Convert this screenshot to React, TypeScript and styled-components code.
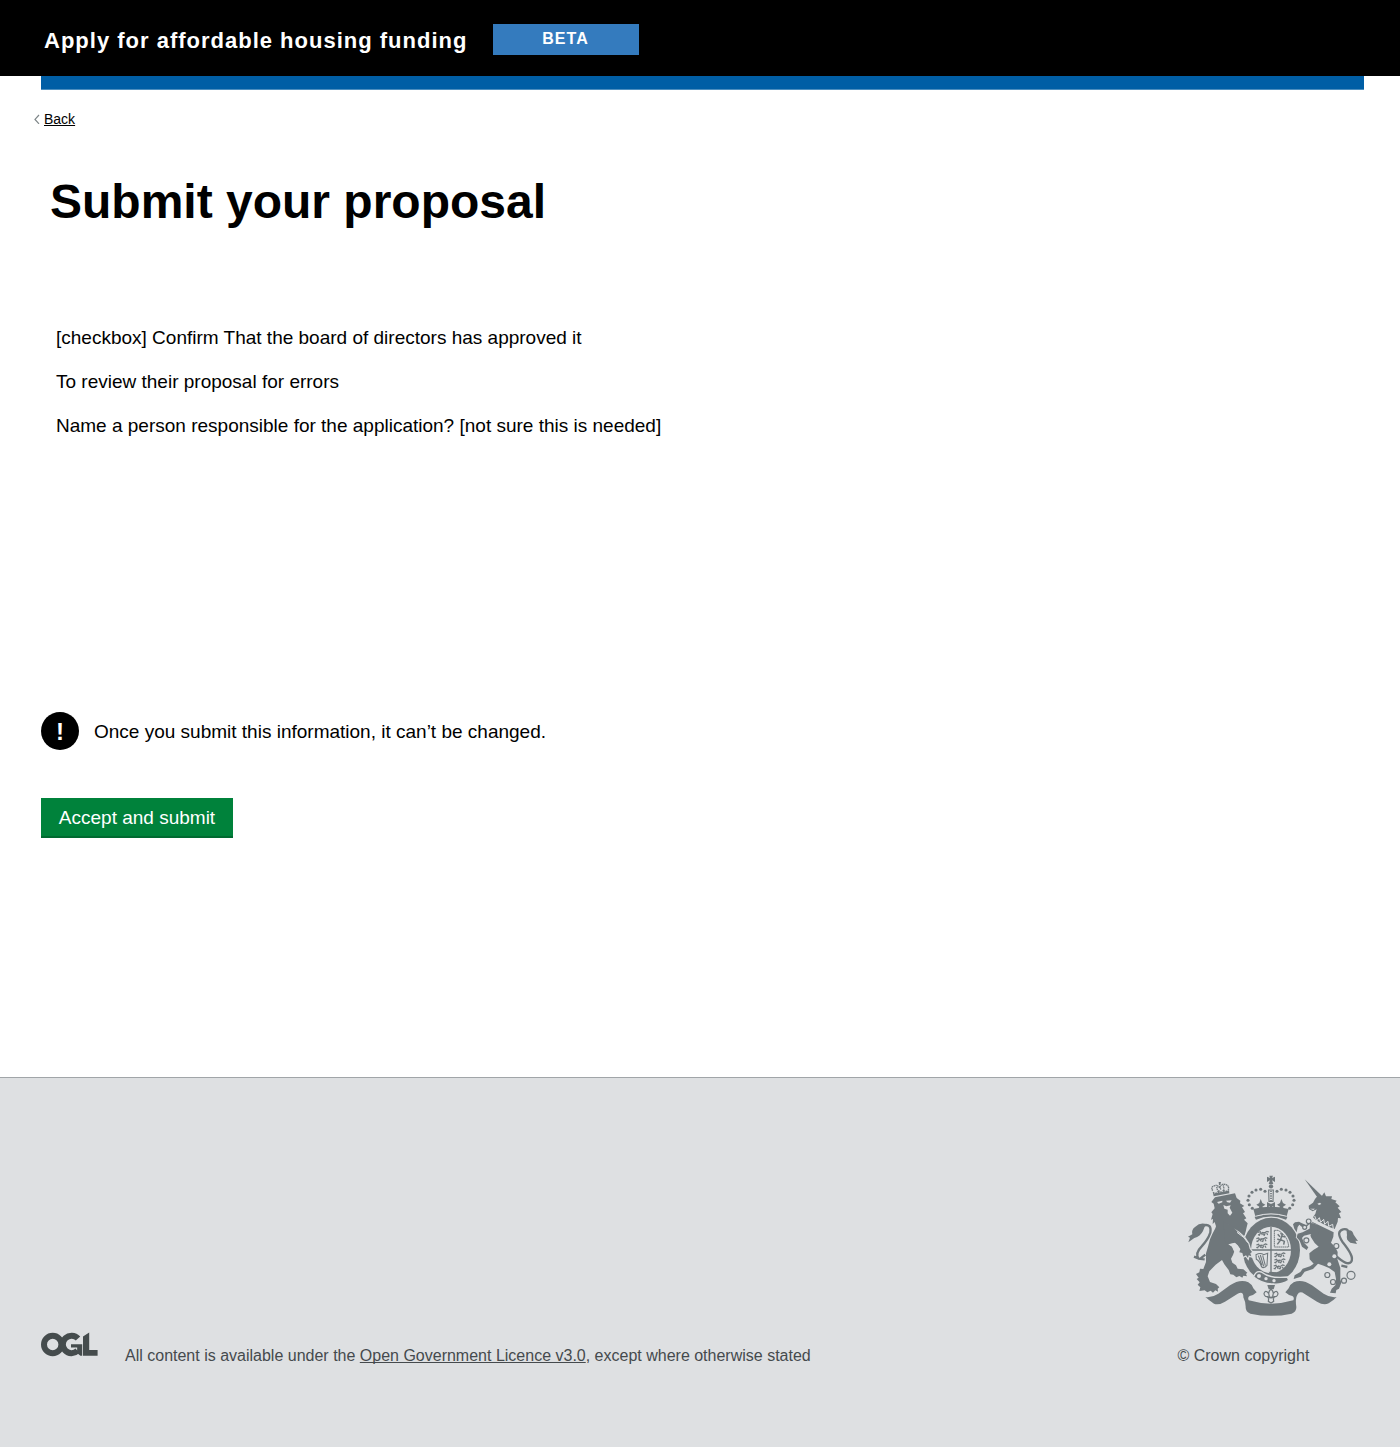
import React from "react";
import styled, { createGlobalStyle } from "styled-components";

const GlobalStyle = createGlobalStyle`
  *, *::before, *::after { box-sizing: border-box; }
  body {
    margin: 0;
    background: #fff;
    color: #000;
    font-family: "Liberation Sans", Arial, sans-serif;
  }
`;

const Page = styled.div`
  display: flex;
  flex-direction: column;
  width: 1400px;
  height: 1447px;
`;

const Header = styled.header`
  display: flex;
  align-items: flex-start;
  height: 76px;
  padding: 24px 0 0 44px;
  background: #000;
  color: #fff;
`;

const ServiceName = styled.div`
  width: 449px;
  padding-top: 4px;
  font-size: 22px;
  font-weight: 700;
  line-height: 26px;
  letter-spacing: 1px;
  white-space: nowrap;
`;

const PhaseTag = styled.div`
  width: 146px;
  height: 31px;
  padding-right: 1px;
  background: #347bbe;
  font-size: 16px;
  font-weight: 700;
  line-height: 30px;
  letter-spacing: 1px;
  text-align: center;
`;

const BlueBar = styled.div`
  height: 14px;
  margin: 0 36px 0 41px;
  background: #005ea5;
  border-bottom: 1px solid #4c8ebf;
`;

const Main = styled.main`
  display: flex;
  flex-direction: column;
  align-items: flex-start;
  flex: 1;
  padding-left: 41px;
`;

const BackLink = styled.a`
  display: flex;
  align-items: center;
  gap: 4px;
  height: 18px;
  margin: 20px 0 0 -7px;
  font-size: 14px;
  line-height: 18px;
  color: #000;
`;

const BackLabel = styled.span`
  text-decoration: underline;
  text-decoration-thickness: 1px;
  text-underline-offset: 1px;
  text-decoration-skip-ink: none;
`;

const Title = styled.h1`
  margin: 46px 0 0 9px;
  font-size: 48px;
  font-weight: 700;
  line-height: 56px;
`;

const Copy = styled.div`
  display: flex;
  flex-direction: column;
  gap: 22px;
  margin: 97px 0 0 15px;
  font-size: 19px;
  line-height: 22px;
`;

const Line = styled.p`
  margin: 0;
  white-space: nowrap;
`;

const Warning = styled.div`
  display: flex;
  align-items: center;
  gap: 15px;
  height: 38px;
  margin-top: 275px;
  font-size: 19px;
  line-height: 22px;
`;

const WarningText = styled.span`
  padding-top: 2px;
`;

const WarningIcon = styled.span`
  display: flex;
  align-items: center;
  justify-content: center;
  width: 38px;
  height: 38px;
  padding-top: 1px;
  border-radius: 50%;
  background: #000;
  color: #fff;
  font-size: 24px;
  font-weight: 700;
`;

const SubmitButton = styled.button`
  width: 192px;
  height: 40px;
  margin-top: 48px;
  padding: 1px 0 0;
  border: 0;
  border-bottom: 2px solid #006a30;
  border-radius: 0;
  background: #00823b;
  color: #fff;
  font-family: inherit;
  font-size: 19px;
  line-height: 38px;
`;

const Footer = styled.footer`
  display: flex;
  justify-content: space-between;
  height: 370px;
  padding: 0 36px 0 41px;
  border-top: 1px solid #a1a5a8;
  background: #dee0e2;
  color: #454a4d;
  font-size: 16px;
  line-height: 20px;
`;

const Licence = styled.div`
  display: flex;
  align-items: flex-start;
  gap: 27px;
  padding-top: 254px;
`;

const LicenceText = styled.p`
  margin: 14px 0 0;
  white-space: nowrap;
`;

const LicenceLink = styled.a`
  text-decoration: underline;
  text-decoration-thickness: 1px;
  text-underline-offset: 1px;
  text-decoration-skip-ink: none;
`;

const Copyright = styled.div`
  display: flex;
  flex-direction: column;
  width: 186.5px;
  padding-top: 92px;
`;

const CrestDrawing = styled.svg`
  display: block;
  width: 180px;
  height: 150px;
  margin-left: 2.5px;
  overflow: visible;
`;

const CopyrightText = styled.p`
  margin: 26px 0 0;
`;

const Chevron = () => (
  <svg width="6" height="10" viewBox="0 0 6 10" fill="none" stroke="#7d8587" strokeWidth="1.2">
    <path d="M5 1 L1 5.4 L5 9.8" />
  </svg>
);

const OglLogo = () => (
  <svg width="57" height="26" viewBox="0 0 57 26" fill="none" stroke="#454c4d">
    <circle cx="11.7" cy="12.5" r="8.7" strokeWidth="6" />
    <path d="M37 6.6 A8.7 8.7 0 1 0 36.5 18.8" strokeWidth="6" />
    <path d="M30 12.2 H41.2 V23.8 H39.4 L36 21 L36.2 15.6 H30 Z" fill="#454c4d" stroke="none" />
    <path d="M42 4.6 L48.2 0.6 V18.1 H56.6 V23.8 H42 Z" fill="#454c4d" stroke="none" />
  </svg>
);

const INK = "#6f777b";
const PAPER = "#dee0e2";

const pearls: [number, number][] = [
  [217, 115], [208, 104], [204, 91], [207, 78], [216, 67], [228, 60], [242, 58], [255, 64],
];

const LION_ARM =
  "M150 172 L176 188 L193 203 L205 221 L209 236 L216 246 L211 250 L214 259 L206 256 L204 264 L198 256 L190 260 L187 249 L178 247 L181 237 L173 226 L160 214 Z";
const UNICORN_LEGS =
  "M408 165 L388 163 L378 172 L366 171 L358 164 L353 171 L350 187 L343 176 L339 163 L345 157 L357 155 L366 160 L378 165 L390 158 Z M402 190 L372 197 L366 204 L372 218 L385 232 L380 240 L366 230 L359 212 L350 202 L353 191 L368 187 L400 170 Z";

const LeftLeopard = ({ x, y }: { x: number; y: number }) => (
  <path
    transform={`translate(${x} ${y})`}
    d="M0 3 L7 1 L9 5 L22 3 L27 0 L33 2 M7 6 L4 11 M11 6 L13 11 M22 5 L19 11 M26 5 L29 11 M13 2 L17 7 M0 10 L6 12 M15 10 L21 12"
    strokeWidth="3.6"
  />
);

const Crest = () => (
  <CrestDrawing viewBox="0 0 540 450" fill={INK} stroke="none" role="img">
    {/* lion: crown, head and mane, body, tail */}
    <path d="M98 62 Q92 52 101 48 Q112 43 119 53 Q123 41 134 43 Q149 46 145 60 M110 51 L113 62 M119 50 L123 60 M130 46 L132 58" fill="none" stroke={INK} strokeWidth="4" strokeDasharray="4 1.4" />
    <path d="M98 65 L108 68 L116 60 L124 65 L131 58 L137 63 L147 58 L148 70 L101 79 Z M116 36 L123 36 L121 45 L117 45 Z" />
    <path d="M102 69 L146 61" stroke={PAPER} strokeWidth="2.4" strokeDasharray="4 4" />
    <path d="M94 96 L105 82 L165 70 L170 84 L181 92 L180 100 L193 108 L186 112 L195 126 L189 130 L199 145 L192 149 L203 160 L200 172 L196 190 L193 203 L176 210 L165 218 L146 222 L156 229 L163 244 L159 255 L153 266 L157 278 L168 286 L173 296 L190 298 L202 308 L198 312 L201 319 L190 317 L187 323 L178 318 L169 322 L160 314 L151 313 L146 300 L133 283 L126 270 L107 284 L88 304 L83 319 L90 336 L108 342 L118 352 L113 356 L114 365 L106 361 L99 368 L92 362 L82 367 L74 361 L58 363 L61 352 L53 344 L59 337 L50 327 L56 323 L48 312 L58 307 L60 296 L70 297 L78 276 L78 250 L84 230 L90 208 L97 192 L106 175 L108 169 L104 156 L98 162 L99 147 L93 149 L98 132 L94 127 L104 115 L101 101 Z" />
    <path d="M111 96 L127 92 L127 97 L116 101 Z M138 92 L155 91 L150 98 L142 97 Z M130 105 L139 109 L152 106 L149 113 L157 128 L150 137 L143 130 L143 119 L133 116 Z" fill={PAPER} />
    <path d="M70 166 Q96 160 91 188 Q84 209 65 229 Q44 250 56 266 L74 268 M57 266 L42 260 M62 265 L76 254" fill="none" stroke={INK} strokeWidth="7" />
    <path d="M25 217 L30 203 L24 200 L37 193 Q33 179 46 170 Q61 156 80 163 Q71 172 69 183 Q61 199 43 204 Z" />

    {/* unicorn: horn, head and mane, collar, body, tail */}
    <path d="M374 28 L427 79 L415 86 Z" />
    <path d="M410 81 L426 77 L433 67 L438 79 L456 79 L454 87 L470 92 L466 97 L479 109 L473 113 L484 126 L477 130 L483 145 L474 144 L473 155 L464 177 L448 171 L431 163 L408 151 L399 142 L406 131 L410 118 L398 124 L387 117 L386 107 L399 98 L405 87 Z" />
    <path d="M412 101 L420 98 L424 102 L417 105 Z M390 116 L405 116 L400 120 Z" fill={PAPER} />
    <path d="M404 138 L410 153 L418 143 L422 157 L431 148 L434 163 L444 154 L446 169 L458 163 L460 178" fill="none" stroke={PAPER} strokeWidth="3" />
    <path d="M398 150 L461 184" stroke={PAPER} strokeWidth="4" />
    <path d="M396 155 L461 187 L460 200 L453 218 L466 232 L473 246 L472 267 L481 294 L481 328 L484 338 L477 356 L469 360 L467 370 L450 368 L455 356 L466 346 L468 327 L464 306 L447 294 L431 287 L414 281 L399 297 L374 305 L363 320 L341 327 L344 316 L361 306 L368 296 L390 289 L401 281 L389 268 L388 250 L400 240 L416 230 L404 219 L393 202 L388 185 L391 170 Z" />
    <path d="M467 257 Q502 289 513 276 Q520 267 511 250 Q504 236 487 215 Q467 184 489 178 Q508 175 504 191 M484 287 L502 291" fill="none" stroke={INK} strokeWidth="7" />
    <path d="M500 183 Q516 176 521 194 L534 213 L526 212 L531 222 L511 218 Q497 210 501 196 Z" />

    {/* garter and quartered shield */}
    <ellipse cx="274" cy="240" rx="90" ry="101" fill={PAPER} />
    <ellipse cx="274" cy="240" rx="86" ry="97" />
    <ellipse cx="273" cy="240" rx="60" ry="70" fill={PAPER} />
    <g fill="none" stroke={INK}>
      <path d="M273 171 V309 M213 240 H333" strokeWidth="4" />
      <LeftLeopard x={234} y={184} />
      <LeftLeopard x={229} y={203} />
      <LeftLeopard x={229} y={222} />
      <LeftLeopard x={283} y={249} />
      <LeftLeopard x={283} y={267} />
      <LeftLeopard x={281} y={285} />
      <path d="M283 181 V231 H326 Q324 198 294 181 Z" strokeWidth="3" strokeDasharray="5 1.2" />
      <path d="M292 223 L301 211 L292 207 M301 211 L307 193 L301 190 M307 199 L316 201 M302 209 L313 214 L311 224 M300 200 L293 193" strokeWidth="4.5" />
      <path d="M228 254 Q241 247 251 254 L263 250 L261 286 Q250 298 244 289 Q239 273 229 268 Z M235 257 L246 286 M241 255 L251 289 M248 256 L256 287" strokeWidth="3.2" />
    </g>

    {/* forelegs resting on the garter */}
    <path d={LION_ARM} stroke={PAPER} strokeWidth="7" />
    <path d={LION_ARM} />
    <path d="M130 155 L160 170 L178 192 L180 212 L162 219 L136 224 Z" />
    <path d="M145 223 L163 219 L173 227 L181 240 L172 238 L163 246 L156 230 Z" fill={PAPER} />
    <path d={UNICORN_LEGS} stroke={PAPER} strokeWidth="5" />
    <path d={UNICORN_LEGS} />
    <path d="M390 160 L405 160 L420 180 L408 208 L388 190 Z" />
    <path d="M171 187 L192 203 L203 218" fill="none" stroke={PAPER} strokeWidth="3" />

    {/* rings of the unicorn's chain */}
    <g fill={PAPER} stroke={INK} strokeWidth="3.6">
      <circle cx="386" cy="154" r="7" /><circle cx="374" cy="172" r="6" />
      <circle cx="379" cy="211" r="7.5" /><circle cx="469" cy="228" r="7.5" />
      <circle cx="442" cy="315" r="7.5" /><circle cx="459" cy="336" r="7.5" />
      <circle cx="492" cy="332" r="7.5" /><circle cx="513" cy="316" r="12" />
      <circle cx="448" cy="283" r="6" stroke="none" /><circle cx="463" cy="259" r="6" stroke="none" />
    </g>

    {/* garter buckle */}
    <path d="M221 321 Q227 301 244 306 Q270 327 322 321 L326 331 Q303 345 280 342 Q247 342 221 321 Z" stroke={PAPER} strokeWidth="4" />
    <path d="M266 305 L290 307 L285 316 L272 315 Z" />
    <g fill={PAPER}><circle cx="237" cy="318" r="6" /><circle cx="258" cy="326" r="5" /><circle cx="282" cy="332" r="5" /></g>

    {/* royal crown */}
    <path d="M261 20 L270 24 L268 17 L279 17 L276 24 L285 20 L285 36 L276 31 L280 42 L266 42 L270 31 L261 36 Z" />
    <circle cx="273" cy="49" r="6.5" />
    <g>
      {pearls.map(([x, y]) => (
        <React.Fragment key={`${x}-${y}`}>
          <circle cx={x} cy={y} r="4.6" />
          <circle cx={546 - x} cy={y} r="4.6" />
        </React.Fragment>
      ))}
    </g>
    <path d="M266 60 H280 L279 94 H267 Z" fill="none" stroke={INK} strokeWidth="3.4" />
    <path d="M273 62 V94" stroke={INK} strokeWidth="5" strokeDasharray="4 3" />
    <path d="M261 96 L271 101 L275 101 L285 96 L285 113 L276 108 L280 118 H266 L270 108 L261 113 Z M242 87 L247 99 L256 104 L247 110 L250 118 H235 L238 110 L229 104 L238 99 Z M304 87 L309 99 L318 104 L309 110 L312 118 H297 L300 110 L291 104 L300 99 Z" />
    <path d="M220 117 Q273 104 326 117 L320 139 Q273 126 226 139 Z" />
    <path d="M228 149 Q218 136 234 138 Q273 128 312 138 Q328 136 318 149 Q273 130 228 149 Z" />
    <path d="M226 139 Q273 124 320 139" fill="none" stroke={PAPER} strokeWidth="3" />

    {/* motto ribbon and pendant */}
    <path d="M76 381 Q95 384 115 371 L150 346 Q180 326 205 337 Q216 343 220 355 L230 367 Q221 376 209 378 Q202 382 206 391 Q273 411 340 391 Q344 382 337 378 Q325 376 316 367 L326 355 Q330 343 341 337 Q366 326 396 346 L431 371 Q451 384 470 381 Q461 391 446 400 Q431 407 411 395 L373 371 Q359 361 352 374 Q345 384 349 410 Q350 426 335 431 Q273 444 211 431 Q196 426 197 410 Q197 396 190 382 Q191 362 173 371 L135 395 Q115 407 102 401 Q87 391 76 381 Z" />
    <path d="M262 345 H285 L281 358 H266 Z" />
    <path d="M273 357 Q259 370 273 384 Q287 370 273 357 M268 378 Q252 384 252 370 Q256 359 265 369 M278 378 Q294 384 294 370 Q290 359 281 369 M262 383 H284 M266 385 L265 394 L273 399 L281 394 L280 385" fill="none" stroke={INK} strokeWidth="3.6" />
  </CrestDrawing>
);

export default function App() {
  return (
    <Page>
      <GlobalStyle />
      <Header>
        <ServiceName>Apply for affordable housing funding</ServiceName>
        <PhaseTag>BETA</PhaseTag>
      </Header>
      <BlueBar />
      <Main>
        <BackLink>
          <Chevron />
          <BackLabel>Back</BackLabel>
        </BackLink>
        <Title>Submit your proposal</Title>
        <Copy>
          <Line>[checkbox] Confirm That the board of directors has approved it</Line>
          <Line>To review their proposal for errors</Line>
          <Line>Name a person responsible for the application? [not sure this is needed]</Line>
        </Copy>
        <Warning>
          <WarningIcon>!</WarningIcon>
          <WarningText>Once you submit this information, it can’t be changed.</WarningText>
        </Warning>
        <SubmitButton>Accept and submit</SubmitButton>
      </Main>
      <Footer>
        <Licence>
          <OglLogo />
          <LicenceText>
            All content is available under the <LicenceLink>Open Government Licence v3.0</LicenceLink>, except where otherwise stated
          </LicenceText>
        </Licence>
        <Copyright>
          <Crest />
          <CopyrightText>© Crown copyright</CopyrightText>
        </Copyright>
      </Footer>
    </Page>
  );
}
